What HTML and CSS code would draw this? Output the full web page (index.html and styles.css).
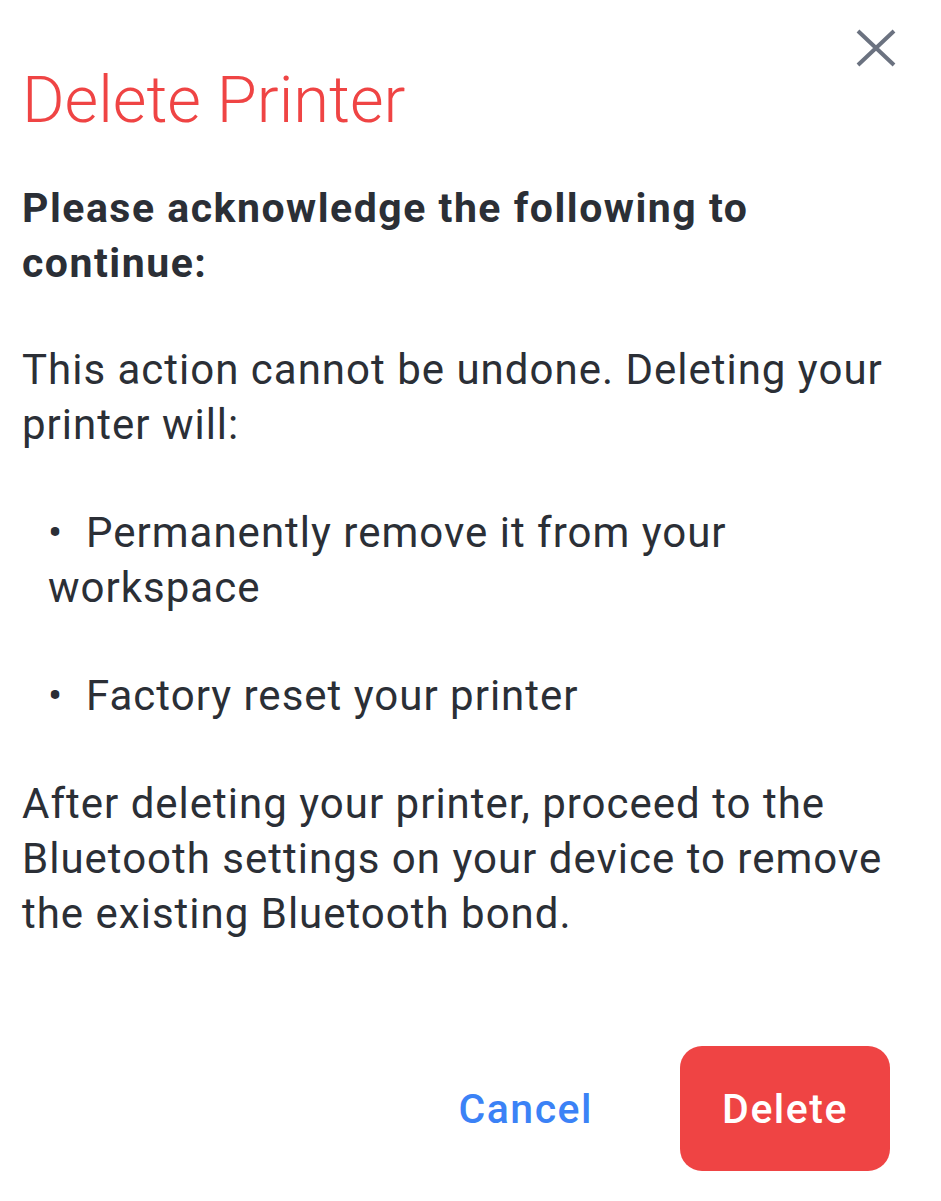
FILE: index.html
```html
<!DOCTYPE html>
<html>
<head>
<meta charset="utf-8">
<link rel="stylesheet" href="styles.css">
</head>
<body>
<div class="dialog">
  <div class="header">
    <h1 class="title">Delete Printer</h1>
    <button class="close" aria-label="Close">
      <svg width="40" height="40" viewBox="0 0 40 40"><path d="M2 3 L38 37 M38 3 L2 37" stroke="#6b7280" stroke-width="4" fill="none"/></svg>
    </button>
  </div>
  <p class="lead">Please acknowledge the following to continue:</p>
  <p class="text first">This action cannot be undone. Deleting your printer will:</p>
  <p class="text item">•&nbsp;&nbsp;Permanently remove it from your workspace</p>
  <p class="text item">•&nbsp;&nbsp;Factory reset your printer</p>
  <p class="text">After deleting your printer, proceed to the Bluetooth settings on your device to remove the existing Bluetooth bond.</p>
  <div class="actions">
    <button class="btn cancel">Cancel</button>
    <button class="btn delete">Delete</button>
  </div>
</div>
</body>
</html>
```
FILE: styles.css
```css
html, body { margin: 0; padding: 0; background: #fff; }
body { font-family: Roboto, "Noto Sans", sans-serif; color: #2b2f36; }
.dialog { padding: 0 30px 0 22px; }
.header { display: flex; justify-content: space-between; align-items: flex-start; }
.title { margin: 0; padding-top: 62px; font-weight: 300; font-size: 65px; line-height: 76px; color: #ef4444; letter-spacing: 0; }
.close { margin: 28px 15px 0 0; padding: 0; border: 0; background: none; width: 40px; height: 40px; }
.close svg { display: block; }
.lead { margin: 43px 0 0; font-weight: 700; font-size: 41px; line-height: 55px; letter-spacing: 1.5px; }
.text { margin: 53px 0 0; font-size: 42px; line-height: 55px; letter-spacing: 1px; }
.text.first { margin-top: 51px; }
.item { padding-left: 26px; }
.actions { display: flex; justify-content: flex-end; align-items: center; gap: 87px; margin-top: 105px; padding-right: 21px; }
.btn { font-family: Roboto, sans-serif; border: 0; font-weight: 500; font-size: 41px; line-height: 48px; letter-spacing: 1.5px; cursor: pointer; }
.cancel { background: none; color: #3b82f6; padding: 0; margin-left: 2px; }
.delete { background: #ef4444; color: #fff; width: 210px; height: 125px; border-radius: 22px; padding: 0; }
```
